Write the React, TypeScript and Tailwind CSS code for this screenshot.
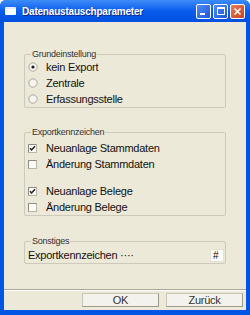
import React from "react";

const font = { fontFamily: '"Liberation Sans", Arial, sans-serif' };

function Radio({ checked }: { checked?: boolean }) {
  return (
    <svg width="10" height="10" viewBox="0 0 10 10" className="shrink-0">
      <circle cx="5" cy="5" r="4.2" fill="#f6f5f0" stroke="#a7a496" strokeWidth="0.9" />
      <path d="M1.6 6.5 A3.6 3.6 0 0 1 6.5 1.6" fill="none" stroke="#cfccc0" strokeWidth="0.8" />
      {checked && <circle cx="5" cy="5" r="1.6" fill="#1a1a1a" />}
    </svg>
  );
}

function Check({ checked }: { checked?: boolean }) {
  return (
    <svg width="9" height="9" viewBox="0 0 9 9" className="shrink-0">
      <rect x="0.5" y="0.5" width="8" height="8" fill="#fbfbf8" stroke="#b9b6a8" />
      <path d="M0.5 8.5 V0.5 H8.5" fill="none" stroke="#8f8c80" />
      {checked && (
        <path d="M2 4.2 L3.6 6 L7 2.3" fill="none" stroke="#1e1e1e" strokeWidth="1.5" />
      )}
    </svg>
  );
}

function Group({
  title,
  children,
  className,
}: {
  title: string;
  children: React.ReactNode;
  className?: string;
}) {
  return (
    <fieldset
      className={
        "mx-[20px] border border-[#cdcabb] rounded-[2px] px-[2px] " + (className || "")
      }
    >
      <legend className="ml-[4px] px-[1px] text-[9px] leading-[8px] text-[#333]">
        {title}
      </legend>
      {children}
    </fieldset>
  );
}

function Row({ children }: { children: React.ReactNode }) {
  return <div className="flex items-center h-[16px] gap-[8px] pl-[1px]">{children}</div>;
}

export default function App() {
  return (
    <div
      className="w-[250px] h-[315px] flex flex-col bg-[#0055e5] overflow-hidden rounded-t-[6px]"
      style={font}
    >
      {/* title bar */}
      <div className="h-[22px] shrink-0 flex items-center pl-[5px] pr-[5px] bg-gradient-to-b from-[#3c8cf8] via-[#0a5ced] to-[#0050e0]">
        <div className="w-[11px] h-[8px] bg-white border-t-[2px] border-[#e8eefc] rounded-[1px]" />
        <span className="ml-[6px] text-white font-bold text-[10px] tracking-[-0.2px] [text-shadow:1px_1px_0_#0a2a8a]">
          Datenaustauschparameter
        </span>
        <div className="ml-auto flex gap-[2px]">
          <div className="w-[15px] h-[15px] rounded-[2px] border border-white bg-gradient-to-br from-[#4f8cf5] to-[#1e56d8] flex items-end pl-[3px] pb-[3px]">
            <div className="w-[5px] h-[2px] bg-white" />
          </div>
          <div className="w-[15px] h-[15px] rounded-[2px] border border-white bg-gradient-to-br from-[#4f8cf5] to-[#1e56d8] flex items-center justify-center">
            <div className="w-[8px] h-[8px] border border-white border-t-[2px]" />
          </div>
          <div className="w-[15px] h-[15px] rounded-[2px] border border-white bg-gradient-to-br from-[#eb7a5a] to-[#c8411e] flex items-center justify-center">
            <svg width="9" height="9" viewBox="0 0 9 9">
              <path d="M1.5 1.5 L7.5 7.5 M7.5 1.5 L1.5 7.5" stroke="white" strokeWidth="1.6" />
            </svg>
          </div>
        </div>
      </div>

      {/* body */}
      <div className="flex-1 mx-[4px] mb-[5px] bg-[#ece9d8] flex flex-col text-[11px] tracking-[-0.25px] text-[#111]">
        <Group title="Grundeinstellung" className="mt-[28px] pt-[1px]">
          <Row>
            <Radio checked />
            <span>kein Export</span>
          </Row>
          <Row>
            <Radio />
            <span>Zentrale</span>
          </Row>
          <Row>
            <Radio />
            <span>Erfassungsstelle</span>
          </Row>
        </Group>

        <Group title="Exportkennzeichen" className="mt-[20px] pt-[4px]">
          <Row>
            <Check checked />
            <span className="ml-[1px]">Neuanlage Stammdaten</span>
          </Row>
          <Row>
            <Check />
            <span className="ml-[1px]">Änderung Stammdaten</span>
          </Row>
          <div className="h-[11px]" />
          <Row>
            <Check checked />
            <span className="ml-[1px]">Neuanlage Belege</span>
          </Row>
          <Row>
            <Check />
            <span className="ml-[1px]">Änderung Belege</span>
          </Row>
        </Group>

        <Group title="Sonstiges" className="mt-[21px] pt-[2px] pr-[1px]">
          <div className="flex items-center h-[16px] pl-[1px]">
            <span>Exportkennzeichen ····</span>
            <div className="ml-auto w-[14px] h-[13px] bg-white border border-[#e3e0d3] flex items-center pl-[2px] text-[10px] text-black">
              #
            </div>
          </div>
        </Group>

        <div className="mt-auto border-t border-[#aca899] border-b border-b-white" />
        <div className="flex justify-end gap-[7px] pt-[2px] pb-[3px] pr-[3px]">
          <button className="w-[77px] h-[14px] bg-[#f3f2ec] border border-[#c9c6b8] border-r-[#9d9a8d] border-b-[#9d9a8d] text-[11px] leading-none text-[#333]">
            OK
          </button>
          <button className="w-[77px] h-[14px] bg-[#f3f2ec] border border-[#c9c6b8] border-r-[#9d9a8d] border-b-[#9d9a8d] text-[11px] leading-none text-[#333]">
            Zurück
          </button>
        </div>
      </div>
    </div>
  );
}
